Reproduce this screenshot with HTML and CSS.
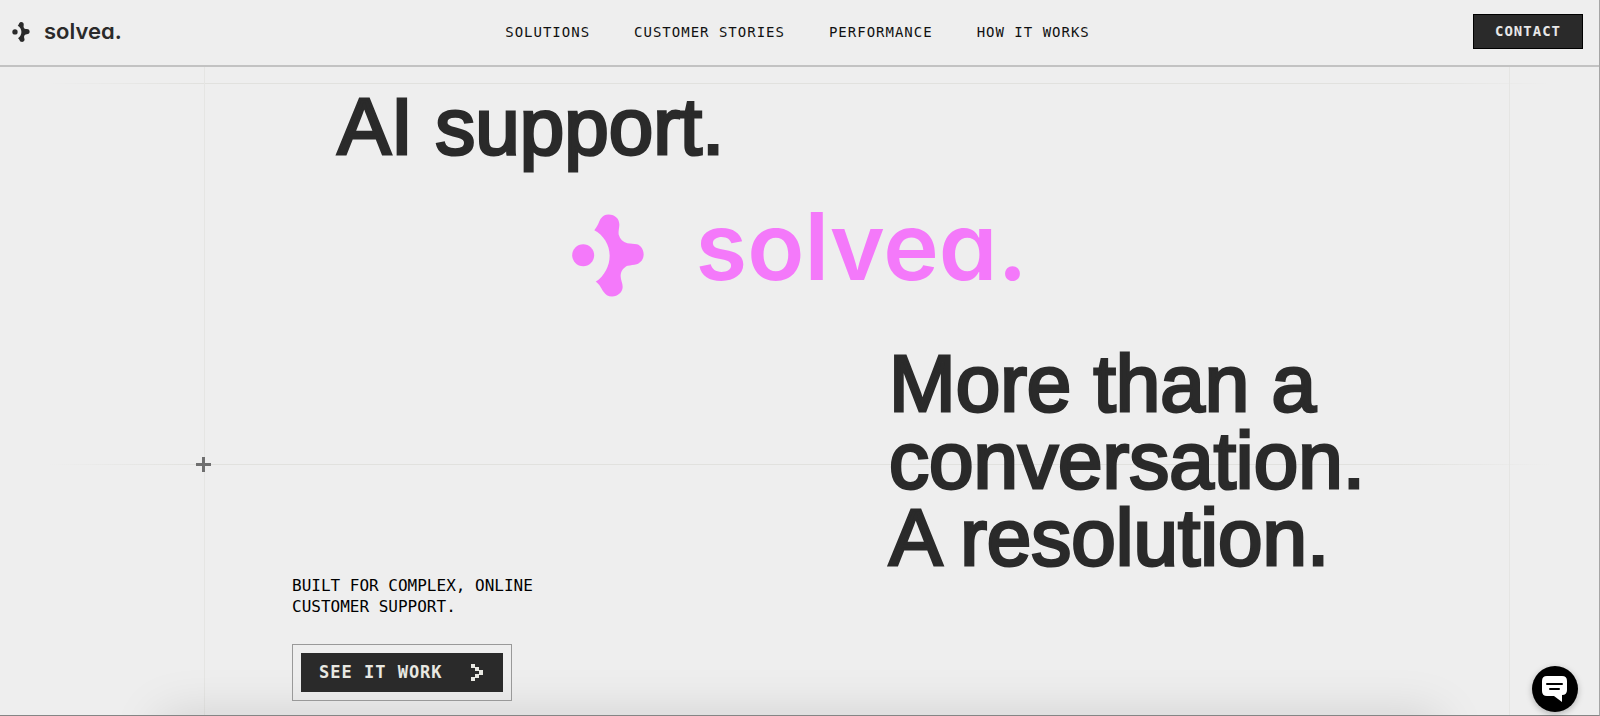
FILE: index.html
```html
<!DOCTYPE html>
<html lang="en">
<head>
<meta charset="utf-8">
<meta name="viewport" content="width=device-width, initial-scale=1">
<title>solvea.</title>
<link rel="stylesheet" href="styles.css">
</head>
<body>
<svg class="sprite" aria-hidden="true">
  <symbol id="mark" viewBox="66 74 216 248">
    <circle cx="99.500" cy="197.500" r="33"/>
    <path d="M133 122C144 110 146 98 152 88C158 79 165 75 176 75C196 75 209 89 208 107C207 119 205 124 206 135C210 149 219 158 232 161C242 163 252 162 261 164C273 168 281 180 281 194C281 209 272 220 260 224C251 227 242 226 233 229C222 233 213 244 212 257C211 270 218 280 218 292C218 308 204 321 186 321C174 321 166 315 160 306C153 296 148 283 137 277C164 259 179 229 179 198C179 166 161 137 133 122Z"/>
  </symbol>
</svg>
<header class="header">
  <a class="brand" href="#"><svg class="brand-mark" aria-hidden="true"><use href="#mark"/></svg><span class="wordmark">solvea.</span></a>
  <nav class="nav">
    <a href="#">SOLUTIONS</a>
    <a href="#">CUSTOMER STORIES</a>
    <a href="#">PERFORMANCE</a>
    <a href="#">HOW IT WORKS</a>
  </nav>
  <a class="contact" href="#">CONTACT</a>
</header>
<main class="hero">
  <div class="guides" aria-hidden="true">
    <i class="guide-h guide-top"></i>
    <i class="guide-h guide-middle"></i>
    <i class="guide-v guide-left"></i>
    <i class="guide-v guide-right"></i>
    <i class="plus"></i>
    <i class="shade"></i>
  </div>
  <h1 class="headline">
    <span class="line-first">AI support.</span>
    <span class="line-logo"><svg class="logo-mark" aria-hidden="true"><use href="#mark"/></svg><span class="wordmark">solvea.</span></span>
    <span class="line-last">More than a<br>conversation.<br>A resolution.</span>
  </h1>
  <div class="cta">
    <p>BUILT FOR COMPLEX, ONLINE<br>CUSTOMER SUPPORT.</p>
    <a class="cta-frame" href="#"><span class="cta-button">SEE IT WORK
      <svg class="chevron" viewBox="0 0 12 17" aria-hidden="true"><path d="M0 0h4v3h4v3h4v5H8v3H4v3H0v-4h4v-3h4V7H4V4H0z"/></svg></span></a>
  </div>
</main>
<button class="chat" aria-label="Open chat">
  <svg viewBox="0 0 26 26" aria-hidden="true"><path class="bubble" d="M5 0H20Q25 0 25 5V14Q25 19 20 19V26L12 20H5Q0 20 0 15V5Q0 0 5 0Z"/><path class="bubble-lines" d="M5 8H20M8 13H17"/></svg>
</button>
</body>
</html>
```
FILE: styles.css
```css
* {
  box-sizing: border-box;
}

body {
  margin: 0;
  min-height: 100vh;
  display: flex;
  flex-direction: column;
  background: #eeeeee;
  border-right: 1px solid #a5a5a5;
  border-bottom: 1px solid #858585;
  color: #2a2a2a;
  font-family: "Liberation Sans", Arial, sans-serif;
}

a {
  color: inherit;
  text-decoration: none;
}

.sprite {
  position: absolute;
  width: 0;
  height: 0;
}

.header {
  display: grid;
  grid-template-columns: 1fr auto 1fr;
  align-items: center;
  height: 67px;
  padding: 0 16px 2px 12px;
  border-bottom: 2px solid #c2c2c2;
  font-family: "DejaVu Sans Mono", monospace;
  font-size: 14px;
  letter-spacing: 1px;
}

.brand {
  display: flex;
  align-items: center;
  gap: 14px;
  font-size: 22px;
  letter-spacing: 0;
}

.brand-mark {
  width: 18px;
  height: 20px;
  fill: currentColor;
}

.wordmark {
  font-family: Inter, sans-serif;
  font-weight: 600;
  font-feature-settings: "cv11";
  line-height: 1;
}

.brand .wordmark {
  padding-bottom: 2px;
}

.nav {
  display: flex;
  gap: 44px;
  color: #111111;
}

.contact {
  justify-self: end;
  padding: 0 21px;
  border: 1px solid #000000;
  background: #2a2a2a;
  color: #e8e8e8;
  font-weight: 700;
  line-height: 33px;
}

.hero {
  position: relative;
  flex: 1;
  padding: 21px 0 12px;
}

.guides {
  position: absolute;
  inset: 0;
  overflow: hidden;
}

.guide-h,
.guide-v {
  position: absolute;
  background: #e5e5e3;
}

.guide-h {
  left: 3%;
  right: 3%;
  height: 1px;
  background: linear-gradient(90deg, transparent, #e1e1de 10%, #e1e1de 90%, transparent);
}

.guide-v {
  top: 0;
  bottom: 0;
  width: 1px;
}

.guide-top {
  top: 16px;
}

.guide-middle {
  top: 397px;
}

.guide-left {
  left: 204px;
}

.guide-right {
  right: 89px;
}

.plus {
  position: absolute;
  left: 196px;
  top: 390px;
  width: 15px;
  height: 15px;
  background:
    linear-gradient(#6f6f6f, #6f6f6f) center / 15px 3px no-repeat,
    linear-gradient(#6f6f6f, #6f6f6f) center / 3px 15px no-repeat;
}

.shade {
  position: absolute;
  left: 10%;
  right: 10%;
  top: 100%;
  height: 60px;
  box-shadow: 0 0 50px rgba(0, 0, 0, 0.13);
}

.headline {
  position: relative;
  margin: 0;
  font-size: 80px;
  font-weight: 400;
  line-height: 77px;
  -webkit-text-stroke: 3px currentColor;
}

.line-first,
.line-last {
  display: block;
}

.line-first {
  padding-left: 21.1%;
}

.line-last {
  padding-left: 55.6%;
}

.line-logo {
  display: flex;
  justify-content: center;
  align-items: center;
  gap: 52px;
  height: 180px;
  color: #f479fa;
  font-size: 94px;
  -webkit-text-stroke: 0;
}

.line-logo .wordmark {
  padding-bottom: 18px;
}

.logo-mark {
  width: 72px;
  height: 83px;
  fill: currentColor;
}

.cta {
  position: relative;
  padding-left: 292px;
  color: #000000;
  font-family: "DejaVu Sans Mono", monospace;
  margin-top: -1px;
}

.cta p {
  margin: 0 0 27px;
  font-size: 16px;
  line-height: 21px;
}

.cta-frame {
  display: inline-block;
  padding: 8px;
  border: 1px solid #999999;
  vertical-align: top;
}

.cta-button {
  display: flex;
  align-items: center;
  gap: 28px;
  padding: 0 20px 0 18px;
  background: #2a2a2a;
  color: #e8e8e2;
  font-size: 17px;
  font-weight: 700;
  letter-spacing: 1px;
  line-height: 39px;
}

.chevron {
  width: 12px;
  height: 17px;
  fill: currentColor;
}

.chat {
  position: fixed;
  right: 22px;
  bottom: 4px;
  display: grid;
  place-items: center;
  width: 46px;
  height: 46px;
  padding: 0;
  border: 0;
  border-radius: 50%;
  background: #000000;
  box-shadow: 0 2px 6px rgba(0, 0, 0, 0.25);
}

.chat svg {
  width: 26px;
  height: 26px;
}

.bubble {
  fill: #ffffff;
}

.bubble-lines {
  fill: none;
  stroke: #000000;
  stroke-width: 2;
  stroke-linecap: round;
}
```
